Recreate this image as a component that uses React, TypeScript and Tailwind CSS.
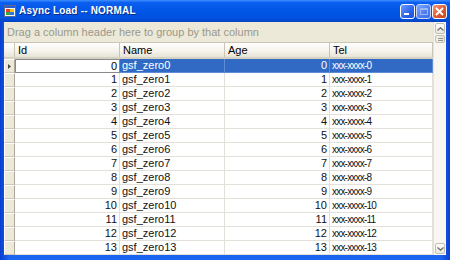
import React from 'react';

const rows = Array.from({ length: 14 }, (_, i) => i);

const TitleBar: React.FC = () => (
  <div className="h-[22px] flex items-center pl-[4px] pr-[3px] bg-[linear-gradient(to_bottom,#3d8dff_0%,#0a5ef0_12%,#0055e5_55%,#0050dd_85%,#0043c0_100%)]">
    <svg width="12" height="12" viewBox="0 0 12 12" className="shrink-0">
      <rect x="0.5" y="0.5" width="11" height="11" fill="#f4f4f4" stroke="#5a6b8c" />
      <rect x="1" y="1" width="10" height="2" fill="#2a5bd7" />
      <rect x="2" y="4" width="4" height="3" fill="#e8402a" />
      <rect x="6" y="4" width="4" height="3" fill="#f6c21a" />
      <rect x="2" y="7" width="4" height="3" fill="#3aa53a" />
      <rect x="6" y="7" width="4" height="3" fill="#2a7ae4" />
    </svg>
    <span className="ml-[3px] text-white font-bold text-[10px] tracking-[0.2px] leading-none [text-shadow:1px_1px_0_#0a2a8a]">
      Async Load -- NORMAL
    </span>
    <div className="ml-auto flex gap-[1px]">
      <div className="w-[15px] h-[15px] rounded-[3px] border border-white bg-[linear-gradient(135deg,#6e9cff,#2a64ec_60%,#1d50d8)] flex items-end pl-[3px] pb-[3px]">
        <div className="w-[5px] h-[2px] bg-white" />
      </div>
      <div className="w-[15px] h-[15px] rounded-[3px] border border-[#c8d6fb] bg-[linear-gradient(135deg,#7ea6ff,#4c7df0_60%,#3f6de2)] flex items-center justify-center">
        <div className="w-[8px] h-[7px] border border-[#9db6f6] border-t-2" />
      </div>
      <div className="w-[15px] h-[15px] rounded-[3px] border border-white bg-[linear-gradient(135deg,#f19a7c,#e05a32_55%,#c8401e)] flex items-center justify-center">
        <svg width="9" height="9" viewBox="0 0 9 9">
          <path d="M1 1 L8 8 M8 1 L1 8" stroke="white" strokeWidth="1.8" />
        </svg>
      </div>
    </div>
  </div>
);

const HeaderCell: React.FC<{ label: string; w: string }> = ({ label, w }) => (
  <div className={`${w} h-full pl-[3px] flex items-center border-r border-[#c9c6b8] text-black`}>{label}</div>
);

const Scrollbar: React.FC = () => (
  <div className="w-[13px] flex flex-col bg-[#f7f6f1] border-l border-[#e6e3d6]">
    <div className="h-[11px] mx-[1px] mt-[1px] rounded-[2px] border border-[#c3c0b2] bg-[linear-gradient(to_bottom,#ffffff,#e9e7dc)] flex items-center justify-center">
      <svg width="7" height="4" viewBox="0 0 7 4">
        <path d="M0.5 3.5 L3.5 0.8 L6.5 3.5" stroke="#6f6f6f" strokeWidth="1.3" fill="none" />
      </svg>
    </div>
    <div className="h-[8px] mx-[1px] mt-[1px] rounded-[2px] border border-[#c3c0b2] bg-[linear-gradient(to_right,#f2f1ea,#e4e1d4)] flex flex-col items-center justify-center gap-[1px]">
      <div className="w-[5px] h-[1px] bg-[#9a978a]" />
      <div className="w-[5px] h-[1px] bg-[#9a978a]" />
    </div>
    <div className="flex-1" />
    <div className="h-[11px] mx-[1px] mb-[1px] rounded-[2px] border border-[#c3c0b2] bg-[linear-gradient(to_bottom,#ffffff,#e9e7dc)] flex items-center justify-center">
      <svg width="7" height="4" viewBox="0 0 7 4">
        <path d="M0.5 0.5 L3.5 3.2 L6.5 0.5" stroke="#6f6f6f" strokeWidth="1.3" fill="none" />
      </svg>
    </div>
  </div>
);

export default function App() {
  return (
    <div className="w-[450px] h-[260px] flex flex-col overflow-hidden bg-[#0a4ee0] font-['Liberation_Sans',Arial,sans-serif] text-[11px]">
      <TitleBar />
      <div className="flex-1 min-h-0 flex px-[4px] pb-[5px] bg-[linear-gradient(to_right,#0a3fd0,#1a64f0_2%,#1a64f0_98%,#0a3fd0)]">
        <div className="flex-1 flex bg-[#ece9d8] overflow-hidden">
          <div className="w-[429px] flex flex-col">
            <div className="h-[21px] flex items-center pl-[3px] text-[#9a988c] border-b border-[#c9c6b8]">
              Drag a column header here to group by that column
            </div>
            <div className="h-[16px] flex bg-[linear-gradient(to_bottom,#ffffff,#f4f2ea_60%,#e6e3d6)] border-b-2 border-[#d6d2c2]">
              <div className="w-[11px] h-full border-r border-[#c9c6b8]" />
              <HeaderCell label="Id" w="w-[105px]" />
              <HeaderCell label="Name" w="w-[105px]" />
              <HeaderCell label="Age" w="w-[105px]" />
              <HeaderCell label="Tel" w="w-[103px]" />
            </div>
            <div className="flex-1 bg-white">
              {rows.map(i => {
                const sel = i === 0;
                const cell = sel
                  ? 'bg-[#316ac5] text-white border-r border-b border-[#5f8ad4]'
                  : 'text-[#111] border-r border-b border-[#e2e0d8]';
                return (
                  <div key={i} className="h-[14px] flex leading-[13px]">
                    <div className="w-[11px] h-full bg-[#ece9d8] border-t border-l border-white border-r border-b border-r-[#aca899] border-b-[#cbc7b8] flex items-center justify-center">
                      {sel && (
                        <svg width="3" height="5" viewBox="0 0 3 5">
                          <path d="M0 0 L3 2.5 L0 5 Z" fill="#4a4a4a" />
                        </svg>
                      )}
                    </div>
                    <div className={`w-[105px] h-full pr-[2px] text-right ${sel ? 'border border-[#8a8a8a] text-black bg-white' : 'text-[#111] border-r border-b border-[#e2e0d8]'}`}>{i}</div>
                    <div className={`w-[105px] h-full pl-[2px] ${cell}`}>gsf_zero{i}</div>
                    <div className={`w-[105px] h-full pr-[2px] text-right ${cell}`}>{i}</div>
                    <div className={`w-[103px] h-full pl-[2px] text-[10px] tracking-[-0.8px] ${cell} ${sel ? '' : 'text-[#3a3a3a]'}`}>xxx-xxxx-{i}</div>
                  </div>
                );
              })}
            </div>
          </div>
          <Scrollbar />
        </div>
      </div>
    </div>
  );
}
